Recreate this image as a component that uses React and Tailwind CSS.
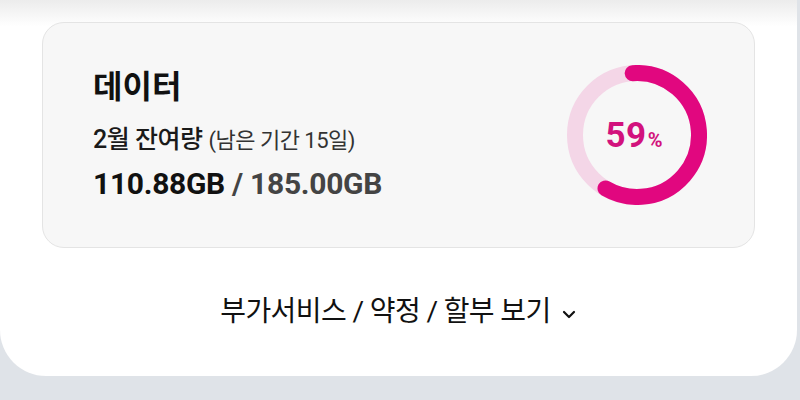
import React from "react";

function Donut() {
  const r = 62;
  const c = 2 * Math.PI * r;
  const pct = 0.595;
  return (
    <div className="relative w-[140px] h-[140px]">
      <svg width="140" height="140" viewBox="0 0 140 140" className="absolute inset-0">
        <circle cx="70" cy="70" r={r} fill="none" stroke="#f4d6e7" strokeWidth="16" />
        <circle
          cx="70"
          cy="70"
          r={r}
          fill="none"
          stroke="#e1077f"
          strokeWidth="16"
          strokeLinecap="round"
          strokeDasharray={`${c * pct} ${c}`}
          transform="rotate(-94 70 70)"
        />
      </svg>
      <div className="absolute inset-0 flex items-center justify-center pr-[6px]">
        <span className="text-[35px] font-bold text-[#d2127d] leading-none tracking-[0.5px]">59</span>
        <span className="text-[20px] font-bold text-[#d2127d] leading-none mt-[9px] ml-[1px]">%</span>
      </div>
    </div>
  );
}

export default function App() {
  return (
    <div
      className="w-[800px] h-[400px] bg-[#dfe3e8] overflow-hidden"
      style={{ fontFamily: "Roboto, 'Noto Sans CJK KR', sans-serif" }}
    >
      <div className="w-[797px] h-[376px] bg-white rounded-b-[46px] flex flex-col bg-gradient-to-b from-[#ececec] via-white via-[7%] to-white">
        <div className="mt-[22px] mx-[42px] h-[226px] rounded-[22px] border border-[#e4e4e4] bg-[#f7f7f7] flex items-center justify-between pl-[50px] pr-[47px]">
          <div className="flex flex-col mt-[-1px]">
            <div className="text-[32px] font-bold text-[#111] leading-none tracking-[0px]">데이터</div>
            <div className="mt-[24px] flex items-baseline leading-none">
              <span className="text-[25px] font-medium text-[#1a1a1a] tracking-[-0.5px]">2월 잔여량</span>
              <span className="ml-[6px] text-[22px] text-[#333] tracking-[-0.5px]">(남은 기간 15일)</span>
            </div>
            <div className="mt-[17px] text-[30px] font-bold leading-none tracking-[-0.3px]">
              <span className="text-[#111]">110.88GB</span>
              <span className="text-[#444]"> / 185.00GB</span>
            </div>
          </div>
          <Donut />
        </div>
        <div className="flex-1 flex items-center justify-center pb-[0px]">
          <span className="text-[28px] text-[#111] tracking-[-0.6px] leading-none">부가서비스 / 약정 / 할부 보기</span>
          <svg width="16" height="11" viewBox="0 0 16 11" className="ml-[10px] mt-[5px]">
            <path d="M3 3 L8 8 L13 3" fill="none" stroke="#111" strokeWidth="2.2" strokeLinecap="round" strokeLinejoin="round" />
          </svg>
        </div>
      </div>
    </div>
  );
}
